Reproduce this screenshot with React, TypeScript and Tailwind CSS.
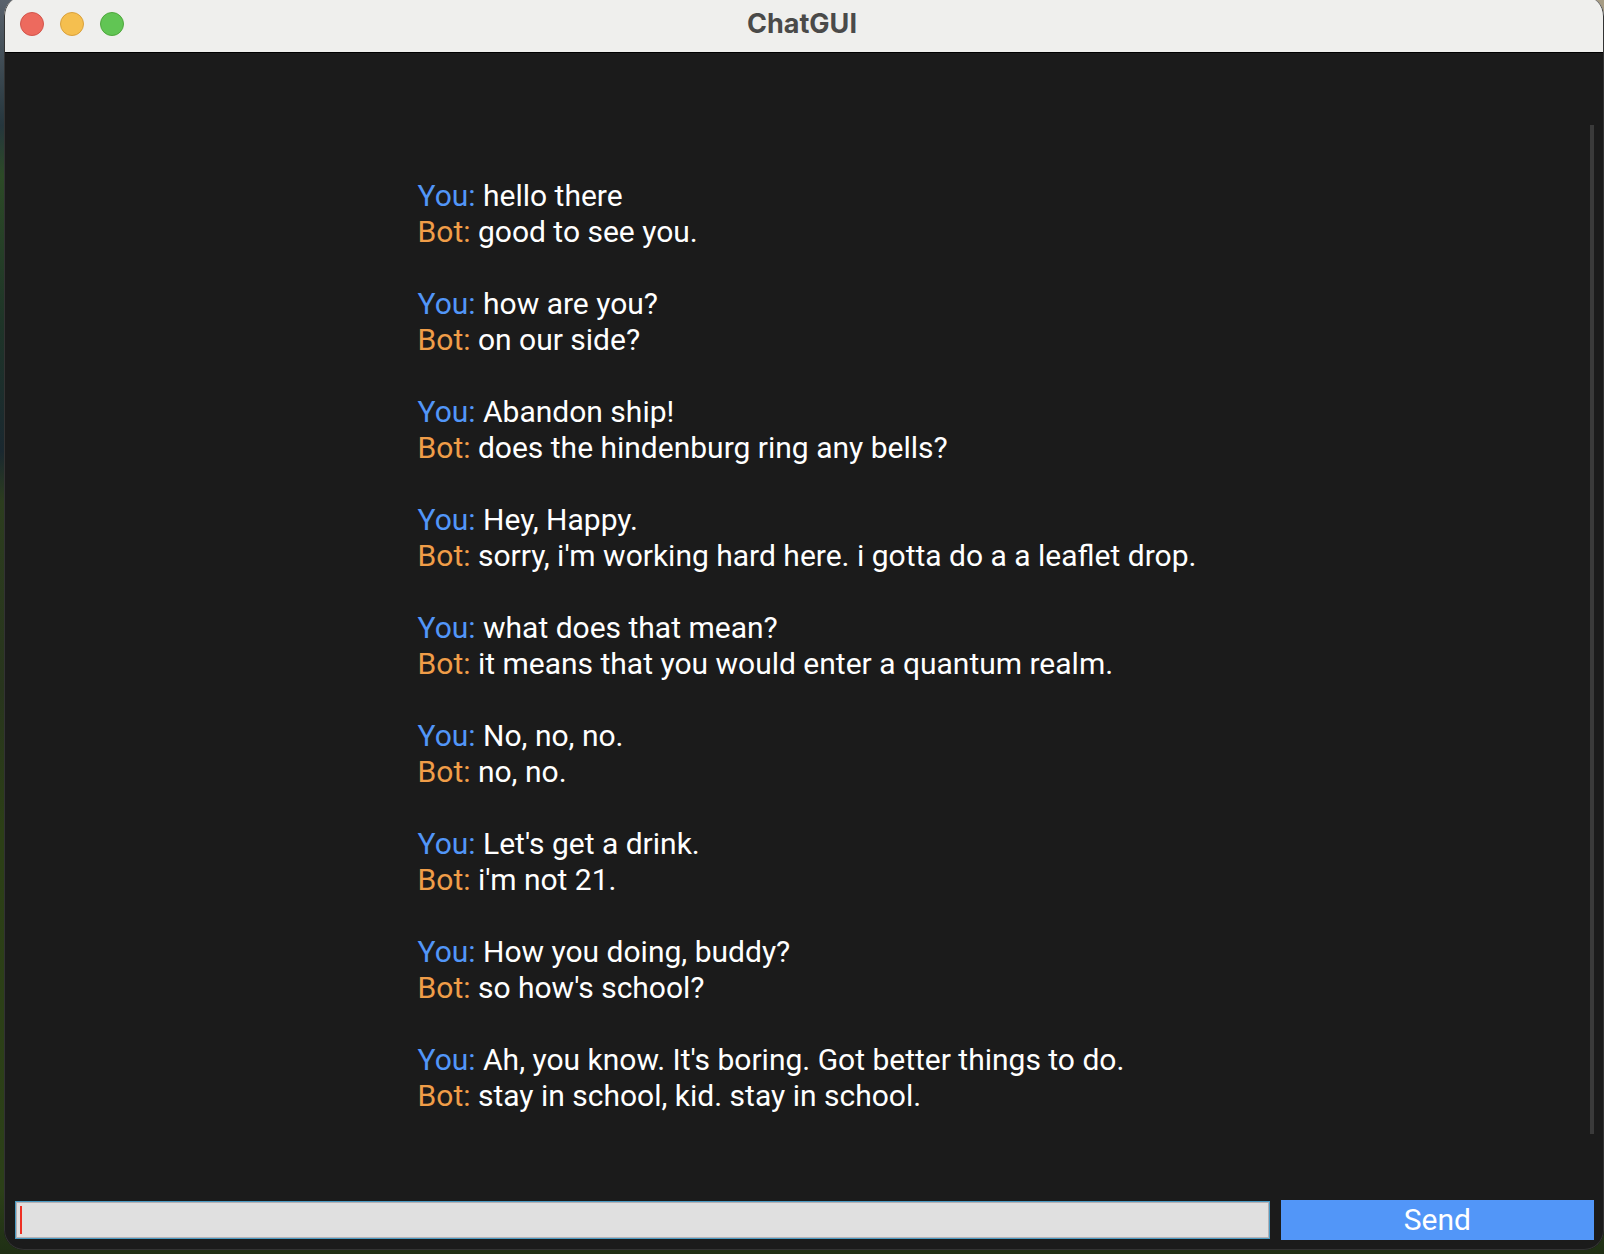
const exchanges = [
  { you: "hello there", bot: "good to see you." },
  { you: "how are you?", bot: "on our side?" },
  { you: "Abandon ship!", bot: "does the hindenburg ring any bells?" },
  { you: "Hey, Happy.", bot: "sorry, i'm working hard here. i gotta do a a leaflet drop." },
  { you: "what does that mean?", bot: "it means that you would enter a quantum realm." },
  { you: "No, no, no.", bot: "no, no." },
  { you: "Let's get a drink.", bot: "i'm not 21." },
  { you: "How you doing, buddy?", bot: "so how's school?" },
  {
    you: "Ah, you know. It's boring. Got better things to do.",
    bot: "stay in school, kid. stay in school.",
  },
];

function TitleBar() {
  return (
    <header className="grid h-[57px] shrink-0 grid-cols-[1fr_auto_1fr] items-center border-b border-black bg-[#efefed] pt-1 pr-5 pb-1 pl-4">
      <div className="flex gap-4">
        <button aria-label="Close" className="size-6 rounded-full border border-[#d2554c] bg-[#ed6a5e]" />
        <button aria-label="Minimize" className="size-6 rounded-full border border-[#d9a03c] bg-[#f5bf4f]" />
        <button aria-label="Zoom" className="size-6 rounded-full border border-[#4fa73d] bg-[#61c554]" />
      </div>
      <h1 className="font-['Inter',sans-serif] text-[27px] leading-8 font-bold text-[#4a4a49]">ChatGUI</h1>
    </header>
  );
}

function Transcript() {
  return (
    <div className="mt-[72px] flex grow justify-center">
      <ul className="flex flex-col gap-9 pt-[53px] pl-[6px] text-[30px] leading-9 text-white">
        {exchanges.map((e) => (
          <li key={e.you}>
            <p>
              <span className="text-[#5296f8]">You:</span> {e.you}
            </p>
            <p>
              <span className="text-[#f09d48]">Bot:</span> {e.bot}
            </p>
          </li>
        ))}
      </ul>
    </div>
  );
}

export default function App() {
  return (
    <div className="flex min-h-screen bg-[radial-gradient(circle_at_top_right,#a79c84_0,#a79c84_20px,transparent_21px),linear-gradient(to_bottom,#5a626c_0%,#25363d_10%,#2c4a26_14%,#1e3428_26%,#1a2830_36%,#2c3d1e_40%,#28351d_55%,#2c3f16_66%,#2c4018_95%,#1f2f15_100%)] pb-1 pl-1 font-['Roboto',sans-serif]">
      <main className="relative -mt-1 flex grow flex-col overflow-hidden rounded-[20px] bg-[#1b1b1b] after:pointer-events-none after:absolute after:inset-0 after:rounded-[20px] after:border after:border-t-0 after:border-[#333333]">
        <TitleBar />
        <Transcript />
        <div className="absolute top-[129px] right-[10px] bottom-[116px] w-1 bg-[#3a3a3a]" />
        <form className="flex items-center gap-[11px] pr-[10px] pb-[10px] pl-[11px]" onSubmit={(e) => e.preventDefault()}>
          <div className="flex h-[38px] grow-4 basis-0 items-center border border-[#4b9cc4] bg-[#e0e0e0] inset-ring inset-ring-[#b5b0b4]">
            <span className="ml-1 h-7 w-[2px] bg-[#ee3024]" />
            <input
              aria-label="Message"
              className="h-full min-w-0 grow bg-transparent text-[28px] text-black caret-[#ee3024] outline-none"
            />
          </div>
          <button className="h-10 grow basis-0 bg-[#5296f8] text-[30px] leading-10 text-white">Send</button>
        </form>
      </main>
    </div>
  );
}
